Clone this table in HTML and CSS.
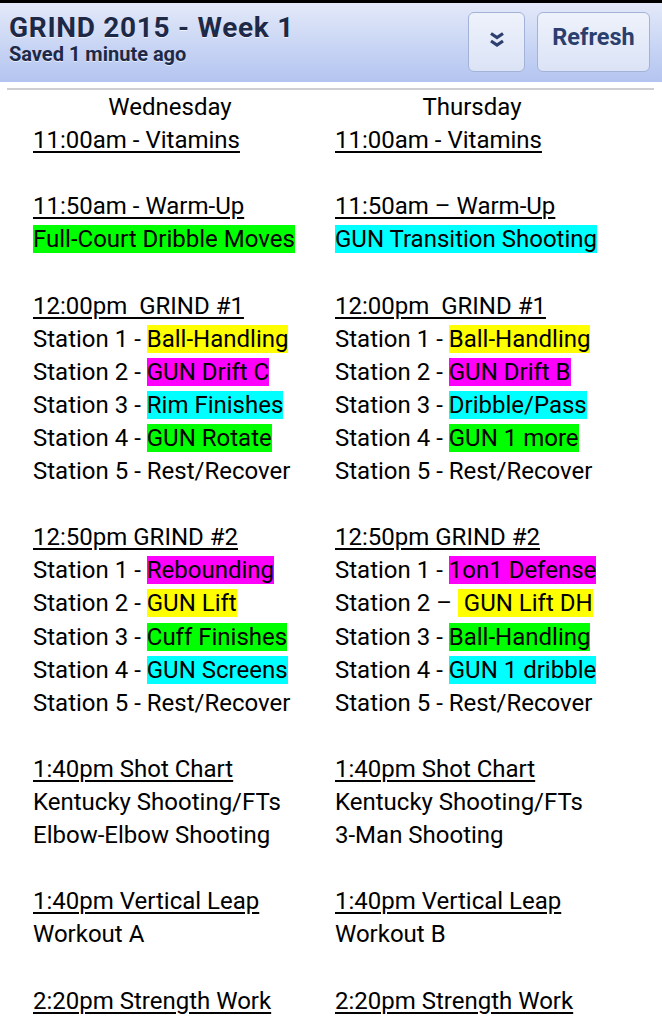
FILE: index.html
```html
<!DOCTYPE html>
<html>
<head>
<meta charset="utf-8">
<link rel="stylesheet" href="styles.css">
</head>
<body>
<header class="bar">
  <div class="titles">
    <div class="title">GRIND 2015 - Week 1</div>
    <div class="saved">Saved 1 minute ago</div>
  </div>
  <div class="actions">
    <button class="btn btn-icon" aria-label="More">
      <svg width="16" height="16" viewBox="0 0 16 16"><path d="M2 1.5 L8 5.5 L14 1.5 M2 9 L8 13 L14 9" fill="none" stroke="#2c3f6e" stroke-width="3.2" stroke-linejoin="miter"/></svg>
    </button>
    <button class="btn btn-text">Refresh</button>
  </div>
</header>
<div class="rule"></div>
<main class="sheet">
  <section class="day">
    <div class="ln dayname">Wednesday</div>
    <div class="ln u">11:00am - Vitamins</div>
    <div class="ln"></div>
    <div class="ln u">11:50am - Warm-Up</div>
    <div class="ln"><span class="hl g">Full-Court Dribble Moves</span></div>
    <div class="ln"></div>
    <div class="ln u">12:00pm&nbsp; GRIND #1</div>
    <div class="ln">Station 1 - <span class="hl y">Ball-Handling</span></div>
    <div class="ln">Station 2 - <span class="hl m">GUN Drift C</span></div>
    <div class="ln">Station 3 - <span class="hl c">Rim Finishes</span></div>
    <div class="ln">Station 4 - <span class="hl g">GUN Rotate</span></div>
    <div class="ln">Station 5 - Rest/Recover</div>
    <div class="ln"></div>
    <div class="ln u">12:50pm GRIND #2</div>
    <div class="ln">Station 1 - <span class="hl m">Rebounding</span></div>
    <div class="ln">Station 2 - <span class="hl y">GUN Lift</span></div>
    <div class="ln">Station 3 - <span class="hl g">Cuff Finishes</span></div>
    <div class="ln">Station 4 - <span class="hl c">GUN Screens</span></div>
    <div class="ln">Station 5 - Rest/Recover</div>
    <div class="ln"></div>
    <div class="ln u">1:40pm Shot Chart</div>
    <div class="ln">Kentucky Shooting/FTs</div>
    <div class="ln">Elbow-Elbow Shooting</div>
    <div class="ln"></div>
    <div class="ln u">1:40pm Vertical Leap</div>
    <div class="ln">Workout A</div>
    <div class="ln"></div>
    <div class="ln u">2:20pm Strength Work</div>
  </section>
  <section class="day">
    <div class="ln dayname">Thursday</div>
    <div class="ln u">11:00am - Vitamins</div>
    <div class="ln"></div>
    <div class="ln u">11:50am – Warm-Up</div>
    <div class="ln"><span class="hl c">GUN Transition Shooting</span></div>
    <div class="ln"></div>
    <div class="ln u">12:00pm&nbsp; GRIND #1</div>
    <div class="ln">Station 1 - <span class="hl y">Ball-Handling</span></div>
    <div class="ln">Station 2 - <span class="hl m">GUN Drift B</span></div>
    <div class="ln">Station 3 - <span class="hl c">Dribble/Pass</span></div>
    <div class="ln">Station 4 - <span class="hl g">GUN 1 more</span></div>
    <div class="ln">Station 5 - Rest/Recover</div>
    <div class="ln"></div>
    <div class="ln u">12:50pm GRIND #2</div>
    <div class="ln">Station 1 - <span class="hl m">1on1 Defense</span></div>
    <div class="ln">Station 2 – <span class="hl y">&nbsp;GUN Lift DH</span></div>
    <div class="ln">Station 3 - <span class="hl g">Ball-Handling</span></div>
    <div class="ln">Station 4 - <span class="hl c">GUN 1 dribble</span></div>
    <div class="ln">Station 5 - Rest/Recover</div>
    <div class="ln"></div>
    <div class="ln u">1:40pm Shot Chart</div>
    <div class="ln">Kentucky Shooting/FTs</div>
    <div class="ln">3-Man Shooting</div>
    <div class="ln"></div>
    <div class="ln u">1:40pm Vertical Leap</div>
    <div class="ln">Workout B</div>
    <div class="ln"></div>
    <div class="ln u">2:20pm Strength Work</div>
  </section>
</main>
</body>
</html>
```
FILE: styles.css
```css
html, body {
  margin: 0;
  padding: 0;
  background: #ffffff;
}
body {
  font-family: Roboto, "Liberation Sans", sans-serif;
  color: #000;
  overflow: hidden;
  height: 1024px;
}
.bar {
  box-sizing: border-box;
  height: 82px;
  border-top: 3px solid #000;
  background: linear-gradient(#e3e9f9, #b3c4f0);
  display: flex;
  justify-content: space-between;
  align-items: flex-start;
  padding: 0 12px 0 9px;
}
.titles {
  padding-top: 10px;
}
.title {
  font-weight: 700;
  font-size: 28px;
  line-height: 30px;
  letter-spacing: 0.7px;
  color: #1d2947;
  text-shadow: 0 1px 0 rgba(255,255,255,0.6);
}
.saved {
  font-weight: 700;
  font-size: 20px;
  line-height: 22px;
  color: #1d2947;
  text-shadow: 0 1px 0 rgba(255,255,255,0.6);
}
.actions {
  display: flex;
  gap: 12px;
  padding-top: 9px;
}
.btn {
  box-sizing: border-box;
  height: 60px;
  border: 1px solid #a3b3d8;
  border-radius: 6px;
  background: linear-gradient(#eef2fb, #dbe3f6);
  font-family: Roboto, "Liberation Sans", sans-serif;
  display: flex;
  align-items: center;
  justify-content: center;
  padding: 0;
}
.btn-icon {
  width: 57px;
}
.btn-text {
  width: 113px;
  font-weight: 700;
  font-size: 23.5px;
  color: #2b3f6e;
  padding-bottom: 10px;
}
.btn-icon svg {
  margin-bottom: 4px;
  margin-left: 1px;
}
.rule {
  height: 2px;
  margin: 6px 8px 0 7px;
  background: #cfcfd3;
}
.sheet {
  display: grid;
  grid-template-columns: 302px 302px;
  padding-left: 19px;
  padding-top: 1px;
}
.day {
  padding-left: 14px;
}
.ln {
  font-size: 24px;
  line-height: 33.1px;
  height: 33.1px;
  white-space: nowrap;
}
.dayname {
  text-align: center;
  padding-right: 14px;
}
.u {
  text-decoration: underline;
  text-underline-offset: 3px;
  text-decoration-thickness: 2px;
}
.g { background: #00ff00; }
.c { background: #00ffff; }
.y { background: #ffff00; }
.m { background: #ff00ff; }
```
